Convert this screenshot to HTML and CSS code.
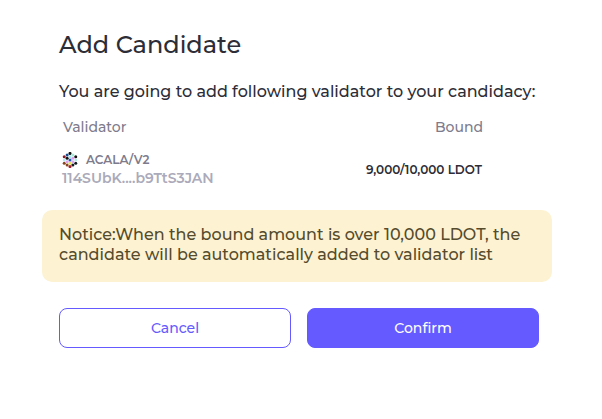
FILE: index.html
```html
<!DOCTYPE html>
<html lang="en">
<head>
<meta charset="utf-8">
<title>Add Candidate</title>
<link rel="stylesheet" href="styles.css">
</head>
<body>
<main class="dialog">
  <h1 class="title">Add Candidate</h1>
  <p class="intro">You are going to add following validator to your candidacy:</p>
  <div class="head"><span>Validator</span><span>Bound</span></div>
  <div class="row">
    <div class="validator">
      <div class="name">
        <svg class="identicon" viewBox="3 3 58 58">
          <circle cx="32" cy="8" r="5.5" fill="#111"/>
          <circle cx="32" cy="20" r="5.5" fill="#a8e8ef"/>
          <circle cx="21.6" cy="14" r="5.5" fill="#164b91"/>
          <circle cx="11.2" cy="20" r="5.5" fill="#8b1825"/>
          <circle cx="21.6" cy="26" r="5.5" fill="#111"/>
          <circle cx="11.2" cy="32" r="5.5" fill="#b4ecf4"/>
          <circle cx="11.2" cy="44" r="5.5" fill="#87461d"/>
          <circle cx="21.6" cy="38" r="5.5" fill="#e0a0ef"/>
          <circle cx="21.6" cy="50" r="5.5" fill="#87461d"/>
          <circle cx="32" cy="56" r="5.5" fill="#a41d29"/>
          <circle cx="32" cy="44" r="5.5" fill="#e8e35b"/>
          <circle cx="42.4" cy="50" r="5.5" fill="#111e24"/>
          <circle cx="52.8" cy="44" r="5.5" fill="#111e24"/>
          <circle cx="42.4" cy="38" r="5.5" fill="#e2a6ef"/>
          <circle cx="52.8" cy="32" r="5.5" fill="#b3eee4"/>
          <circle cx="52.8" cy="20" r="5.5" fill="#111"/>
          <circle cx="42.4" cy="26" r="5.5" fill="#df9fec"/>
          <circle cx="42.4" cy="14" r="5.5" fill="#a5ead6"/>
          <circle cx="32" cy="32" r="5.5" fill="#2459b8"/>
        </svg>
        <span class="label">ACALA/V2</span>
      </div>
      <div class="address">114SUbK....b9TtS3JAN</div>
    </div>
    <div class="amount">9,000/10,000 LDOT</div>
  </div>
  <div class="notice">Notice:When the bound amount is over 10,000 LDOT, the<br>candidate will be automatically added to validator list</div>
  <div class="actions">
    <button class="btn cancel">Cancel</button>
    <button class="btn confirm">Confirm</button>
  </div>
</main>
</body>
</html>
```
FILE: styles.css
```css
* { box-sizing: border-box; }
body { margin: 0; background: #fff; color: #2d2d37; font-family: Montserrat, Inter, sans-serif; font-weight: 500; }
.dialog { width: 602px; height: 419px; padding: 30px 50px 0 42px; overflow: hidden; white-space: nowrap; }
.title { margin: 0 17px; font-size: 24px; line-height: 30px; font-weight: 500; }
.intro { margin: 22px 17px 0; font-size: 16px; line-height: 20px; }
.head { display: flex; justify-content: space-between; margin: 16px 69px 0 21px; font-size: 14px; line-height: 18px; color: #7d7b8c; }
.row { display: flex; justify-content: space-between; align-items: center; height: 36px; margin: 16px 70px 0 20px; }
.name { display: flex; align-items: center; gap: 8px; height: 16px; margin-bottom: 2px; }
.validator { height: 37px; margin-top: -1px; }
.identicon { display: block; width: 16px; height: 16px; margin-top: 2px; }
.label { font-size: 12px; font-weight: 600; color: #7d7b8c; }
.address { height: 19px; font-size: 14px; line-height: 18px; font-weight: 600; color: #abaaba; }
.amount { font-size: 12px; font-weight: 600; line-height: 16px; }
.notice { height: 72px; margin-top: 22px; padding: 15px 17px; border-radius: 10px; background: #fdf3d2; color: #554b2d; font-size: 16px; line-height: 20px; }
.actions { display: flex; gap: 16px; margin: 26px 13px 0 17px; }
.btn { flex: 1; height: 40px; padding: 0; border: 1px solid #645aff; border-radius: 8px; background: #fff; color: #645aff; font: inherit; font-size: 14px; }
.confirm { background: #645aff; color: #fff; }
```
